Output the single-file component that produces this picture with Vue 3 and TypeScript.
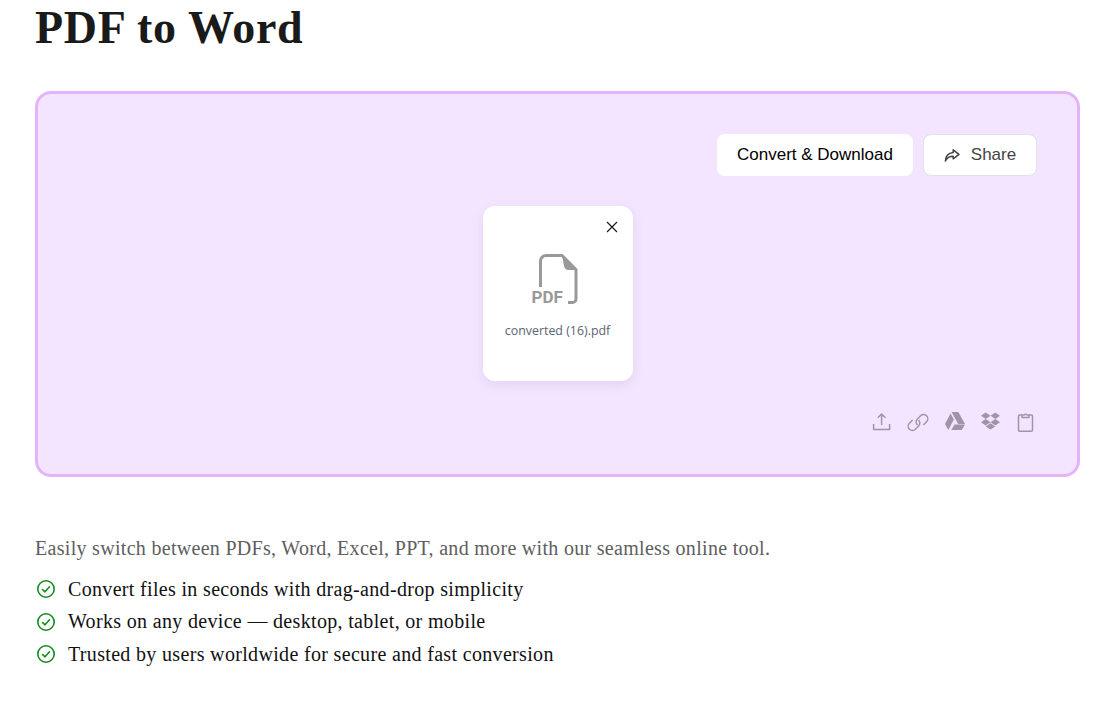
<template>
  <main class="page">
    <h1 class="title">PDF to Word</h1>

    <section class="dropzone">
      <div class="actions">
        <button class="btn btn--primary" type="button">Convert &amp; Download</button>
        <button class="btn btn--share" type="button">
          <svg class="share-icon" viewBox="0 0 16 16" width="16" height="16" fill="none" stroke="#444" stroke-width="1.5" stroke-linejoin="round">
            <path d="M9.200 2.800 15 7.400l-5.800 4.400V9.200C5.600 9.200 3 10.600 1.400 14c.2-4.600 2.800-8 7.800-8.500V2.800Z" />
          </svg>
          <span>Share</span>
        </button>
      </div>

      <div class="file-card">
        <button class="file-card__close" type="button" aria-label="Remove">
          <svg viewBox="0 0 12 12" width="12" height="12" fill="none" stroke="#1a1a1a" stroke-width="1.2">
            <path d="M1 1l10 10M11 1 1 11" />
          </svg>
        </button>
        <div class="pdf-icon">
          <svg viewBox="0 0 46 50" width="46" height="50" fill="none">
            <path d="M8.500 33V7a5.500 5.500 0 0 1 5.500-5.500H30l14 14V45a3.500 3.500 0 0 1-3.500 3.500H36" stroke="#999" stroke-width="3" />
            <path d="M30 1.500l14 14.500H37a5 5 0 0 1-5-4Z" fill="#999" />
          </svg>
          <span class="pdf-icon__label">PDF</span>
        </div>
        <div class="file-card__name">converted (16).pdf</div>
      </div>

      <div class="sources">
        <svg v-for="icon in sourceIcons" :key="icon.name" class="source" viewBox="0 0 20 20" width="20" height="20">
          <path v-for="(d, i) in icon.paths" :key="i" :d="d" :fill="icon.solid ? '#a294a8' : 'none'" :stroke="icon.solid ? 'none' : '#a294a8'" stroke-width="1.5" stroke-linejoin="round" />
        </svg>
      </div>
    </section>

    <p class="lead">Easily switch between PDFs, Word, Excel, PPT, and more with our seamless online tool.</p>

    <ul class="points">
      <li v-for="point in points" :key="point" class="point">
        <svg viewBox="0 0 20 20" width="20" height="20" fill="none" stroke="#128c1f" stroke-width="1.600" stroke-linecap="round" stroke-linejoin="round">
          <circle cx="10" cy="10" r="8.200" />
          <path d="M6.500 10.500l2.500 2.300 4.500-5" />
        </svg>
        <span>{{ point }}</span>
      </li>
    </ul>
  </main>
</template>

<script setup lang="ts">
interface SourceIcon {
  name: string
  solid: boolean
  paths: string[]
}

const sourceIcons: SourceIcon[] = [
  { name: 'upload', solid: false, paths: ['M.6 12v5.400h16v-5.400', 'M8.600 13V2M4.800 5.800l3.800-3.800 3.800 3.800'] },
  {
    name: 'link',
    solid: false,
    paths: [
      'M14.370 12.970 17.570 9.770A4.200 4.200 0 0 0 11.630 3.830L8.430 7.030A4.200 4.200 0 0 0 8.430 12.970',
      'M3.630 8.030.43 11.230A4.200 4.200 0 0 0 6.370 17.170L9.570 13.970A4.200 4.200 0 0 0 9.570 8.030',
    ],
  },
  { name: 'drive', solid: true, paths: ['M6.500 0h6.800L20 12h-6.800Z', 'M5.500 1.500l3.400 6L3.300 18 0 12Z', 'M9.500 12.500H20L16.700 18H6.300Z'] },
  {
    name: 'dropbox',
    solid: true,
    paths: [
      'M4.700 .6l4.800 3.200-4.800 3.200L0 3.800Z',
      'M14.300 .6l4.700 3.200-4.700 3.200-4.800-3.200Z',
      'M0 10.200l4.700-3.200 4.800 3.200-4.800 3.200Z',
      'M9.500 10.200l4.800-3.200 4.700 3.200-4.700 3.200Z',
      'M4.700 14.400l4.800-3.200 4.800 3.200-4.800 3.200Z',
    ],
  },
  {
    name: 'clipboard',
    solid: false,
    paths: [
      'M5 3H2.700a1.200 1.200 0 0 0-1.200 1.200V18a1.200 1.200 0 0 0 1.200 1.200h11.600a1.200 1.200 0 0 0 1.200-1.200V4.200A1.200 1.200 0 0 0 14.300 3H12',
      'M5 5.500V3h2.200a1.500 1.500 0 0 1 2.600 0H12v2.500Z',
    ],
  },
]

const points: string[] = [
  'Convert files in seconds with drag-and-drop simplicity',
  'Works on any device — desktop, tablet, or mobile',
  'Trusted by users worldwide for secure and fast conversion',
]
</script>

<style>
html,
body {
  margin: 0;
  background: #fff;
}
</style>

<style scoped>
.page {
  width: 1045px;
  margin-left: 35px;
  font-family: "Liberation Serif", Georgia, serif;
}

.title {
  margin: 0;
  padding-top: 3px;
  height: 91px;
  box-sizing: border-box;
  font-size: 46px;
  letter-spacing: 0.700px;
  line-height: 50px;
  font-weight: 700;
  color: #1a1a1a;
}

.dropzone {
  box-sizing: border-box;
  height: 386px;
  padding: 40px 40px 0;
  border: 3px solid #e4b4fb;
  border-radius: 16px;
  background: #f3e5ff;
  display: flex;
  flex-direction: column;
}

.actions {
  display: flex;
  justify-content: flex-end;
  gap: 10px;
}

.btn {
  height: 42px;
  box-sizing: border-box;
  border-radius: 8px;
  background: #fff;
  font-family: "Liberation Sans", Arial, sans-serif;
  font-size: 17px;
}

.btn--primary {
  width: 196px;
  border: 0;
  color: #000;
}

.btn--share {
  width: 114px;
  border: 1px solid #e5e0e8;
  color: #444;
  display: flex;
  align-items: center;
  justify-content: center;
  gap: 11px;
}

.file-card {
  position: relative;
  align-self: center;
  box-sizing: border-box;
  width: 150px;
  height: 175px;
  margin-top: 30px;
  padding-top: 48px;
  border-radius: 12px;
  background: #fff;
  box-shadow: 0 4px 12px rgba(120, 80, 160, 0.12);
  display: flex;
  flex-direction: column;
  align-items: center;
}

.file-card__close {
  position: absolute;
  top: 15px;
  right: 15px;
  width: 12px;
  height: 12px;
  padding: 0;
  border: 0;
  background: none;
  display: flex;
}

.pdf-icon {
  position: relative;
  width: 46px;
  height: 52px;
  margin-right: 6px;
}

.pdf-icon__label {
  position: absolute;
  left: 0;
  bottom: 0;
  padding-right: 2px;
  background: #fff;
  font-family: Roboto, "Liberation Sans", sans-serif;
  font-size: 17px;
  line-height: 18px;
  font-weight: 700;
  color: #999;
}

.file-card__name {
  margin-top: 16px;
  font-family: "Open Sans", "Noto Sans", sans-serif;
  font-size: 12.400px;
  line-height: 17px;
  color: #5b6472;
}

.sources {
  display: flex;
  justify-content: flex-end;
  gap: 16px;
  margin-top: 31px;
}

.source {
  display: block;
  overflow: visible;
}

.lead {
  margin: 60px 0 0;
  font-size: 20px;
  letter-spacing: 0.300px;
  line-height: 22px;
  color: #5e5e5e;
}

.points {
  list-style: none;
  margin: 14px 0 0;
  padding: 0;
}

.point {
  display: flex;
  align-items: center;
  gap: 12px;
  height: 32.500px;
  font-size: 20px;
  letter-spacing: 0.330px;
  color: #111;
}

.point svg {
  flex-shrink: 0;
  margin-left: 1px;
}
</style>
